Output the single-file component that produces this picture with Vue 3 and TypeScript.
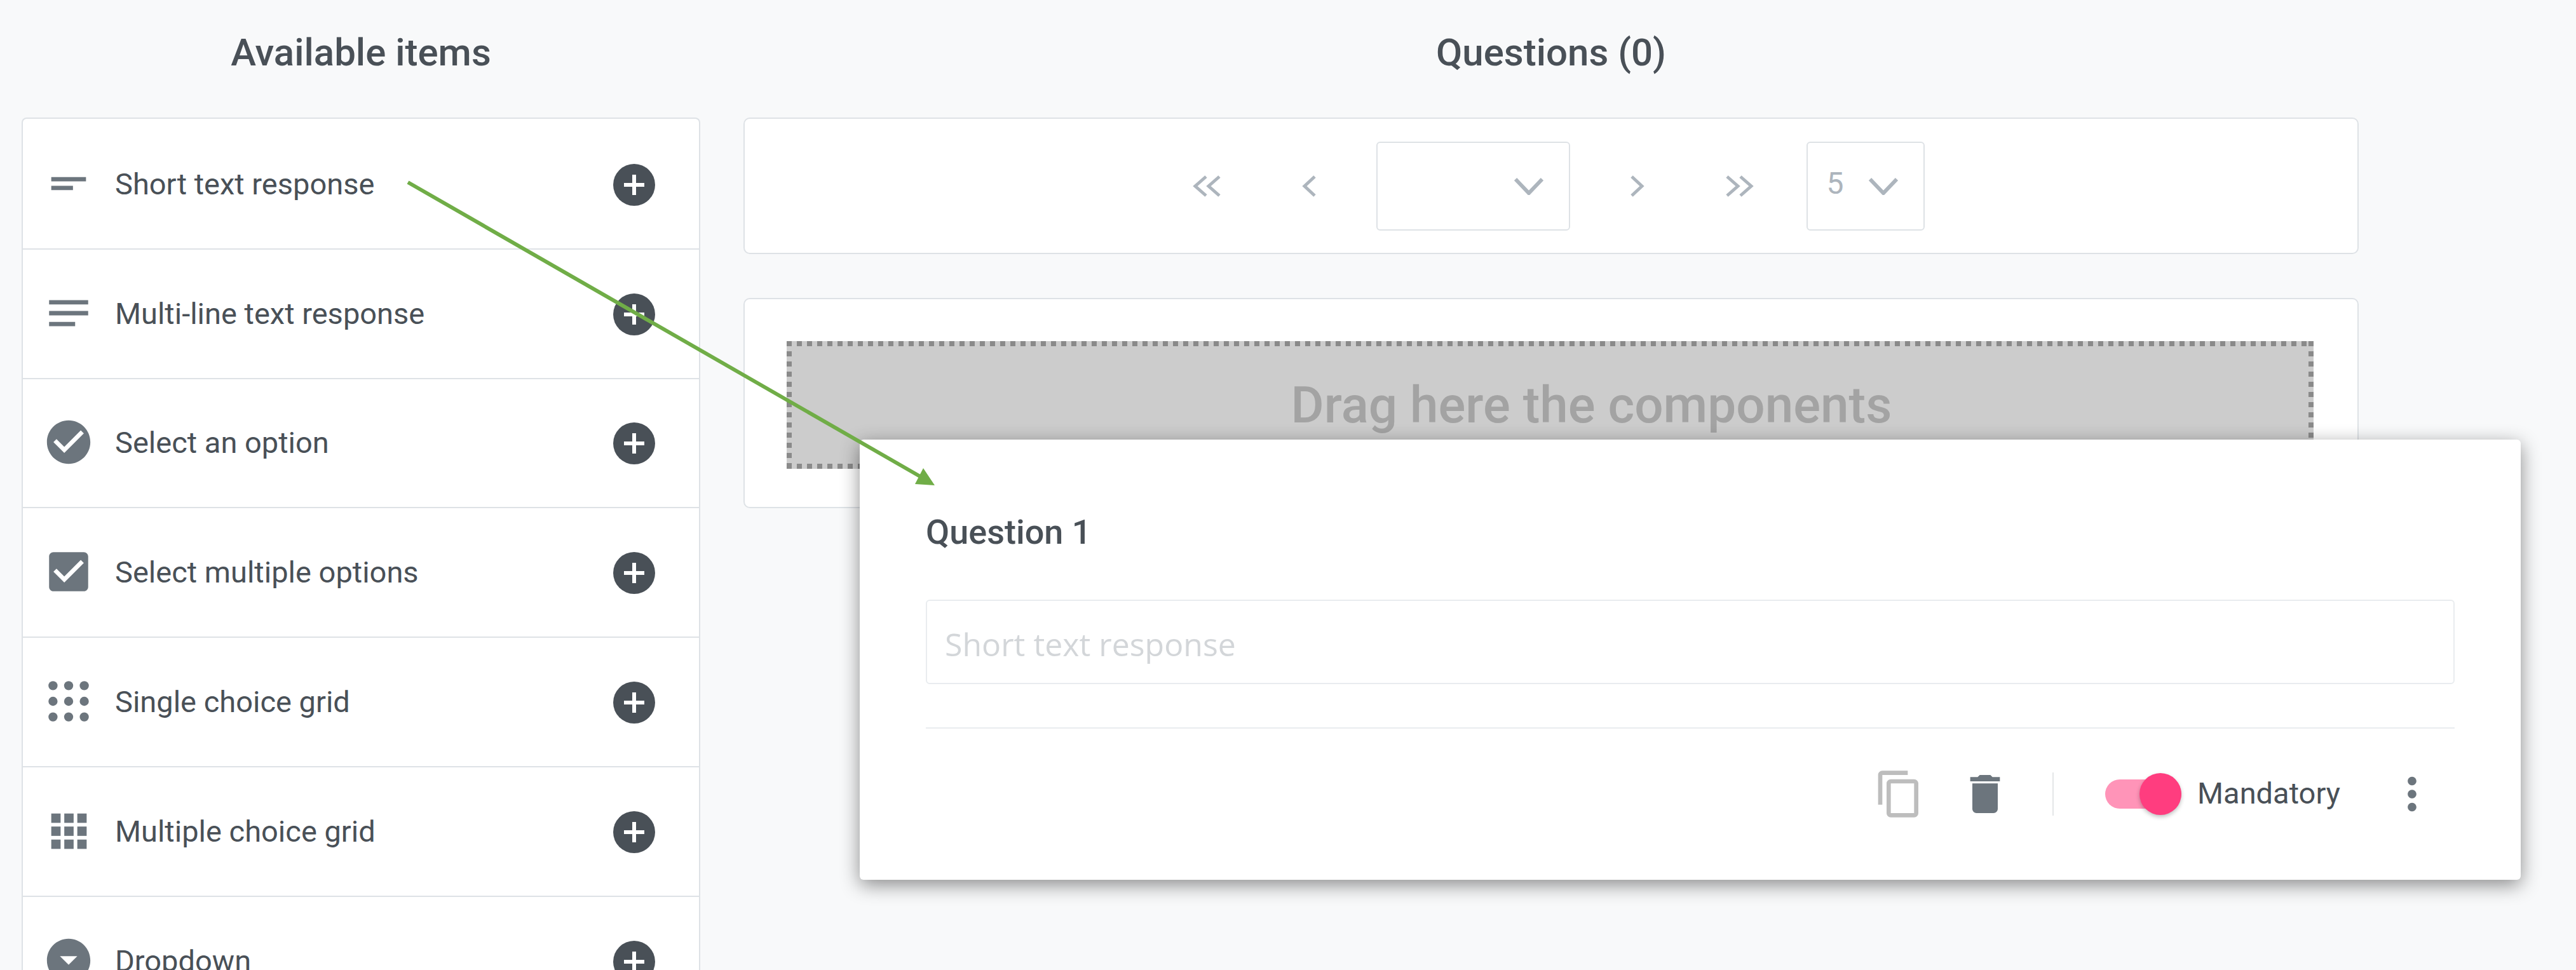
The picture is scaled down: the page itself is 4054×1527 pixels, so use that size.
<script setup lang="ts">
interface Item {
  label: string
  icon: string
}
const items: Item[] = [
  { label: 'Short text response', icon: 'short' },
  { label: 'Multi-line text response', icon: 'notes' },
  { label: 'Select an option', icon: 'radio' },
  { label: 'Select multiple options', icon: 'check' },
  { label: 'Single choice grid', icon: 'dots' },
  { label: 'Multiple choice grid', icon: 'squares' },
  { label: 'Dropdown', icon: 'drop' }
]
const paths: Record<string, string> = {
  short: 'M4 9h16v2H4zm0 4h10v2H4z',
  notes: 'M3 18h12v-2H3v2zM3 6v2h18V6H3zm0 7h18v-2H3v2z',
  radio: 'M12 2C6.48 2 2 6.48 2 12s4.48 10 10 10 10-4.48 10-10S17.52 2 12 2zm-2 15l-5-5 1.41-1.41L10 14.17l7.59-7.59L19 8l-9 9z',
  check: 'M19 3H5c-1.11 0-2 .9-2 2v14c0 1.1.89 2 2 2h14c1.11 0 2-.9 2-2V5c0-1.1-.89-2-2-2zm-9 14l-5-5 1.41-1.41L10 14.17l7.59-7.59L19 8l-9 9z',
  drop: 'M12 2C6.48 2 2 6.48 2 12s4.48 10 10 10 10-4.48 10-10S17.52 2 12 2zm0 12l-4-4h8l-4 4z'
}
const grid = [4.8, 12, 19.2]
const squares = [4, 10, 16]
</script>

<template>
  <div class="page">
    <section class="left">
      <h2 class="title">Available items</h2>
      <ul class="list">
        <li v-for="item in items" :key="item.label" class="row">
          <svg class="item-icon" viewBox="0 0 24 24">
            <template v-if="item.icon === 'dots'">
              <template v-for="y in grid" :key="y">
                <circle v-for="x in grid" :key="x" :cx="x" :cy="y" r="2.1" />
              </template>
            </template>
            <template v-else-if="item.icon === 'squares'">
              <template v-for="y in squares" :key="y">
                <rect v-for="x in squares" :key="x" :x="x" :y="y" width="4.3" height="4.3" />
              </template>
            </template>
            <path v-else :d="paths[item.icon]" />
          </svg>
          <span class="row-label">{{ item.label }}</span>
          <svg class="plus" viewBox="0 0 66 66">
            <circle cx="33" cy="33" r="33" />
            <path d="M33 17v32M17 33h32" />
          </svg>
        </li>
      </ul>
    </section>

    <section class="right">
      <h2 class="title">Questions (0)</h2>
      <div class="card pager">
        <button class="nav"><svg viewBox="0 0 46 34"><path d="M21 2 4 17l17 15M42 2 25 17l17 15" /></svg></button>
        <button class="nav"><svg class="single" viewBox="0 0 22 34"><path d="M20 2 4 17l16 15" /></svg></button>
        <div class="select wide">
          <svg class="caret" viewBox="0 0 46 28"><path d="M2 3l21 22L44 3" /></svg>
        </div>
        <button class="nav"><svg class="single" viewBox="0 0 22 34"><path d="M2 2l16 15L2 32" /></svg></button>
        <button class="nav"><svg viewBox="0 0 46 34"><path d="M4 2l17 15L4 32M25 2l17 15-17 15" /></svg></button>
        <div class="select narrow">
          <span class="size">5</span>
          <svg class="caret" viewBox="0 0 46 28"><path d="M2 3l21 22L44 3" /></svg>
        </div>
      </div>
      <div class="card zone-card">
        <div class="zone">Drag here the components</div>
      </div>
    </section>

    <div class="popup">
      <div class="q-title">Question 1</div>
      <div class="q-input">Short text response</div>
      <div class="q-footer">
        <svg class="tool copy" viewBox="0 0 24 24"><path d="M16 1H4c-1.1 0-2 .9-2 2v14h2V3h12V1zm3 4H8c-1.1 0-2 .9-2 2v14c0 1.1.9 2 2 2h11c1.1 0 2-.9 2-2V7c0-1.1-.9-2-2-2zm0 16H8V7h11v14z" /></svg>
        <svg class="tool trash" viewBox="0 0 24 24"><path d="M6 19c0 1.1.9 2 2 2h8c1.1 0 2-.9 2-2V7H6v12zM19 4h-3.5l-1-1h-5l-1 1H5v2h14V4z" /></svg>
        <span class="sep"></span>
        <span class="toggle"><span class="thumb"></span></span>
        <span class="toggle-label">Mandatory</span>
        <svg class="more" viewBox="0 0 24 24"><path d="M12 8c1.1 0 2-.9 2-2s-.9-2-2-2-2 .9-2 2 .9 2 2 2zm0 2c-1.1 0-2 .9-2 2s.9 2 2 2 2-.9 2-2-.9-2-2-2zm0 6c-1.1 0-2 .9-2 2s.9 2 2 2 2-.9 2-2-.9-2-2-2z" /></svg>
      </div>
    </div>

    <svg class="arrow" viewBox="0 0 4054 1527">
      <line x1="642" y1="287" x2="1448" y2="750" />
      <polygon points="1471,764 1440,762 1453,737" />
    </svg>
  </div>
</template>

<style scoped>
.page {
  position: relative;
  display: flex;
  gap: 68px;
  height: 1527px;
  width: 4054px;
  padding-left: 34px;
  box-sizing: border-box;
  overflow: hidden;
  background: #f8f9fa;
  font-family: Roboto, "Liberation Sans", sans-serif;
  color: #495057;
}
.left { width: 1068px; flex: none; }
.right { width: 2542px; flex: none; }
.title {
  margin: 0;
  height: 185px;
  box-sizing: border-box;
  padding-top: 47px;
  font-size: 60px;
  line-height: 72px;
  font-weight: 500;
  text-align: center;
}
.list {
  margin: 0;
  padding: 2px 0 0;
  list-style: none;
  background: #fff;
  border: 2px solid #dee2e6;
  border-bottom: 0;
  border-radius: 8px 8px 0 0;
}
.row {
  display: flex;
  align-items: center;
  height: 203.8px;
  box-sizing: border-box;
  padding: 0 69px 0 31px;
  border-bottom: 2px solid #dee2e6;
}
.item-icon { width: 82px; height: 82px; flex: none; fill: #6c757d; margin-top: -2px; }
.row-label { margin-left: 32px; font-size: 47px; line-height: 60px; flex: 1; }
.plus { width: 66px; height: 66px; flex: none; margin-top: 2px; }
.plus circle { fill: #495057; }
.plus path { stroke: #fff; stroke-width: 6; fill: none; }
.card {
  background: #fff;
  border: 2px solid #dee2e6;
  border-radius: 10px;
  box-sizing: border-box;
}
.pager {
  height: 215px;
  display: flex;
  align-items: center;
  justify-content: center;
  gap: 52px;
  padding-right: 8px;
}
.nav {
  width: 108px;
  height: 80px;
  padding: 0;
  border: 0;
  background: none;
  display: flex;
  align-items: center;
  justify-content: center;
}
.nav svg { width: 46px; height: 34px; fill: none; stroke: #adb5bd; stroke-width: 5; }
.nav svg.single { width: 22px; }
.select {
  height: 140px;
  box-sizing: border-box;
  border: 2px solid #dee2e6;
  border-radius: 6px;
  display: flex;
  align-items: center;
  justify-content: flex-end;
  background: #fff;
}
.select.wide { width: 305px; padding-right: 40px; }
.select.narrow { width: 186px; padding-right: 40px; justify-content: space-between; padding-left: 30px; }
.size { font-size: 48px; color: #adb5bd; margin-top: -8px; }
.caret { width: 46px; height: 28px; fill: none; stroke: #adb5bd; stroke-width: 6; flex: none; }
.zone-card {
  margin-top: 69px;
  height: 331px;
  padding: 66px 69px 60px 66px;
}
.zone {
  height: 201px;
  box-sizing: border-box;
  padding-left: 130px;
  background-color: #ccc;
  background-image:
    linear-gradient(90deg, #8a8a8a 50%, transparent 50%),
    linear-gradient(90deg, #8a8a8a 50%, transparent 50%),
    linear-gradient(180deg, #8a8a8a 50%, transparent 50%),
    linear-gradient(180deg, #8a8a8a 50%, transparent 50%);
  background-size: 16px 8px, 16px 8px, 8px 16px, 8px 16px;
  background-position: 0 0, 0 100%, 0 0, 100% 0;
  background-repeat: repeat-x, repeat-x, repeat-y, repeat-y;
  display: flex;
  align-items: center;
  justify-content: center;
  font-size: 80px;
  font-weight: 500;
  color: #a3a3a3;
}
.popup {
  position: absolute;
  left: 1353px;
  top: 692px;
  width: 2614px;
  height: 693px;
  box-sizing: border-box;
  padding: 119px 104px 0 104px;
  background: #fff;
  border-radius: 6px;
  box-shadow: 0 8px 30px rgba(0, 0, 0, 0.45);
}
.q-title { font-size: 54px; line-height: 52px; font-weight: 500; margin-top: 1px; margin-bottom: -1px; }
.q-input {
  margin-top: 81px;
  height: 133px;
  box-sizing: border-box;
  border: 2px solid #e9ecef;
  border-radius: 6px;
  padding: 6px 0 0 28px;
  display: flex;
  align-items: center;
  font-family: "Open Sans", sans-serif;
  font-size: 50px;
  color: #d3d6d9;
}
.q-footer {
  margin-top: 68px;
  padding-top: 62px;
  border-top: 2px solid #e9ecef;
  display: flex;
  align-items: center;
  justify-content: flex-end;
  padding-right: 26px;
}
.tool { width: 80px; height: 80px; flex: none; }
.copy { fill: #bdbdbd; }
.trash { fill: #6c757d; margin-left: 55px; }
.sep { width: 2px; height: 68px; background: #e4e6e8; margin-left: 66px; }
.toggle {
  position: relative;
  width: 120px;
  height: 46px;
  margin-left: 81px;
  border-radius: 23px;
  background: #ff94b8;
  flex: none;
}
.thumb {
  position: absolute;
  right: 0;
  top: -10px;
  width: 66px;
  height: 66px;
  border-radius: 50%;
  background: #ff3d7f;
  box-shadow: 0 3px 6px rgba(0, 0, 0, 0.25);
}
.toggle-label { margin-left: 25px; font-size: 47px; line-height: 60px; margin-top: -3px; }
.more { width: 82px; height: 82px; fill: #6c757d; margin-left: 72px; flex: none; }
.arrow {
  position: absolute;
  left: 0;
  top: 0;
  width: 4054px;
  height: 1527px;
  pointer-events: none;
}
.arrow line { stroke: #70ad47; stroke-width: 6; }
.arrow polygon { fill: #70ad47; }
</style>

<style>
html, body { margin: 0; background: #f8f9fa; overflow: hidden; }
</style>
